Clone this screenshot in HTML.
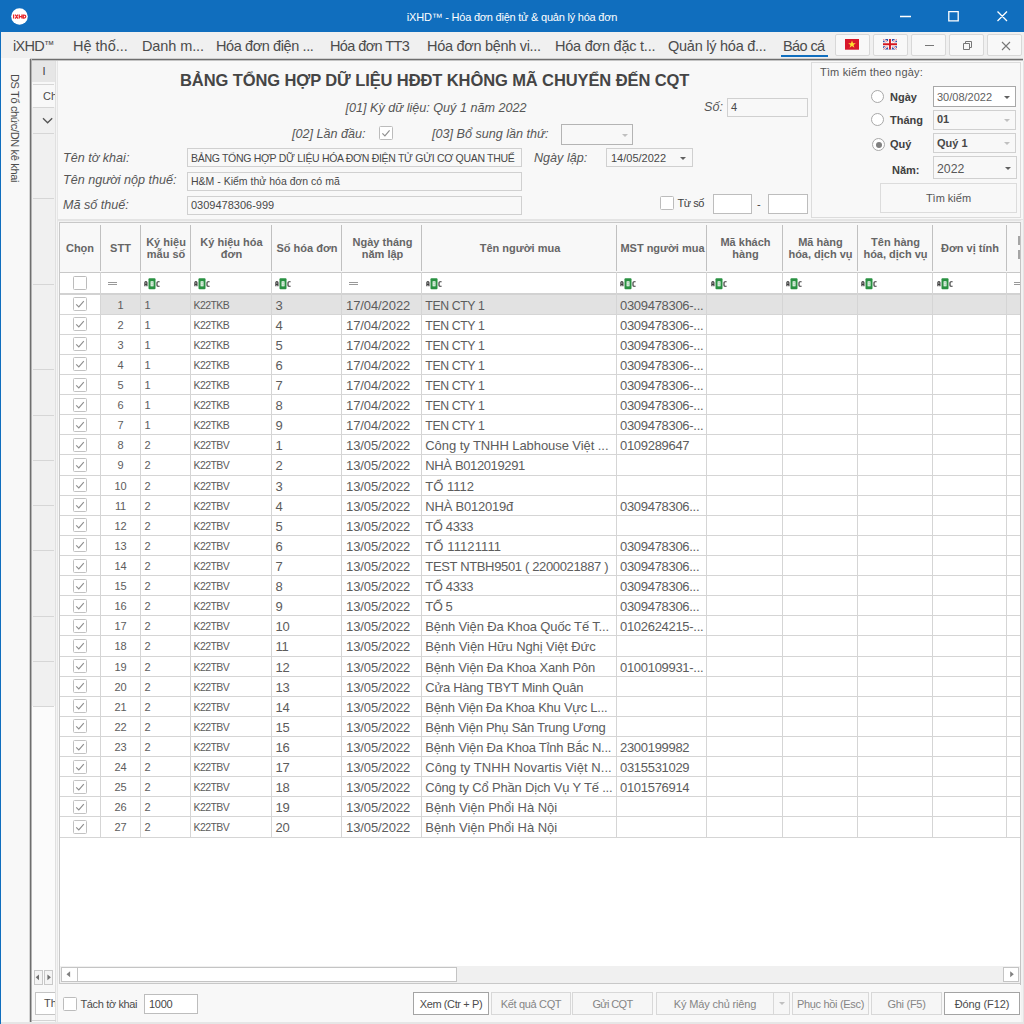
<!DOCTYPE html>
<html><head><meta charset="utf-8"><title>iXHD</title>
<style>
*{box-sizing:border-box;margin:0;padding:0}
html,body{width:1024px;height:1024px;overflow:hidden;background:#f0f0f0;font-family:"Liberation Sans",sans-serif;font-size:11px;color:#404040}
.a{position:absolute}
#titlebar{position:absolute;left:0;top:0;width:1024px;height:32px;background:#106ebe}
#title{position:absolute;left:0;width:1024px;top:10px;text-align:center;color:#fff;font-size:11px;line-height:14px;letter-spacing:-0.22px}
#lborder{position:absolute;left:0;top:32px;width:1px;height:992px;background:#106ebe}
#menubar{position:absolute;left:1px;top:32px;width:1023px;height:26px;background:#f0f0f0}
.mi{position:absolute;top:37px;font-size:14.5px;line-height:18px;color:#4c4c4c;white-space:nowrap}
.mbtn{position:absolute;top:34px;height:22px;width:35px;border:1px solid #d8d8d8;border-radius:2px;background:#f8f8f8}
#side{position:absolute;left:1px;top:58px;width:29px;height:964px;background:#f8f8f8}
#sidetxt{position:absolute;left:8px;top:74px;writing-mode:vertical-rl;font-size:11px;color:#4c4c4c;white-space:nowrap;line-height:14px;letter-spacing:-0.35px}
#darkv{position:absolute;left:29px;top:59px;width:3px;height:963px;background:linear-gradient(to right,#d4d4d4 1px,#6e6e6e 1px,#6e6e6e 2px,#b4b4b4 2px)}
#darkh{position:absolute;left:30px;top:58px;width:993px;height:3px;background:linear-gradient(to bottom,#d0d0d0 1px,#6e6e6e 1px,#6e6e6e 2px,#c4c4c4 2px)}
#tabs{position:absolute;left:32px;top:61px;width:23px;height:961px;background:#f0f0f0}
#main{position:absolute;left:58px;top:61px;width:965px;height:961px;background:#f8f8f8}
.lbl{position:absolute;font-style:italic;font-size:12.6px;line-height:16px;color:#565656;white-space:nowrap}
.inp{position:absolute;border:1px solid #d0d0d0;background:#f8f8f8;font-size:11px;line-height:17px;padding-left:3px;color:#484848;white-space:nowrap;overflow:hidden}
.inp.w{background:#fff;border-color:#bdbdbd}
.cb{position:absolute;width:14px;height:14px;border:1px solid #bcbcbc;border-radius:1.5px;background:#fff}
.arr{position:absolute;width:0;height:0;border-left:3px solid transparent;border-right:3px solid transparent;border-top:3px solid #606060}
.arr.dis{border-top-color:#c0c0c0}
/* grid */
#grid{position:absolute;left:59px;top:222px;width:962px;height:762px;background:#fff;border:1px solid #c8c8c8}
#ghead{position:absolute;left:60px;top:223px;width:960px;height:50px;background:#f8f8f8;border-bottom:1px solid #c8c8c8;box-shadow:0 1px 0 #e4e4e4}
.hc{position:absolute;top:224px;height:48px;display:flex;align-items:center;justify-content:center;text-align:center;font-weight:bold;font-size:11px;line-height:12.5px;color:#666}
.hs{position:absolute;top:225px;width:1px;height:46px;background:#c0c0c0}
#frow{position:absolute;left:60px;top:273px;width:960px;height:22px;background:#fff;border-bottom:2px solid #d2d2d2}
.row{position:absolute;left:60px;width:960px;height:20.11px;border-bottom:1px solid #d5d5d5;background:#fff}
.row.sel{background:linear-gradient(to right,#fff 40px,#e2e2e2 40px)}
.row .c{position:absolute;top:0;height:20px;line-height:20px;white-space:nowrap;color:#5c5c5c}
.ck{position:absolute;left:13px;top:2.5px;width:14px;height:14px;border:1px solid #c2c2c2;border-radius:1.5px;background:#fff}
.ck svg{position:absolute;left:-1px;top:-1px;width:14px;height:14px}
.ck path{fill:none;stroke:#8e8e8e;stroke-width:1.15}
.c1{left:40px;width:41px;text-align:center;font-size:11px;letter-spacing:-0.2px}
.c2{left:84.5px;font-size:11px}
.c3{left:133.5px;font-size:10.5px;letter-spacing:-0.56px}
.c4{left:215.5px;top:1px!important;font-size:13px;letter-spacing:-0.3px}
.c5{left:286px;top:1px!important;font-size:13px;letter-spacing:-0.09px}
.c6{left:365.3px;top:1px!important;font-size:13px}
.c7{left:560px;top:1px!important;font-size:13px;letter-spacing:-0.3px}
.vl{position:absolute;width:1px;background:#d5d5d5}
.btn{position:absolute;top:992px;height:23px;border:1px solid #d8d8d8;background:#f6f6f6;color:#858585;font-size:11px;line-height:22px;text-align:center;white-space:nowrap}
.btn.on{background:#fff;border-color:#a4a4a4;color:#4c4c4c}
.rad{width:13px;height:13px;border-radius:50%;border:1px solid #a8a8a8;background:#fff}
.rad.on::after{content:"";position:absolute;left:2.5px;top:2.5px;width:6px;height:6px;border-radius:50%;background:#808080}
.rl{font-weight:bold;font-size:11px;line-height:14px;color:#404040}
.sb{border:1px solid #c4c4c4;background:#fff}

</style></head>
<body>
<div id="titlebar">
  <svg class="a" style="left:10.7px;top:7.6px" width="17" height="17" viewBox="0 0 17 17"><circle cx="8.5" cy="8.5" r="8.3" fill="#fff"/><g fill="none" stroke="#e6282e" stroke-width="1.25"><path d="M2.6 6.6V10.6M4.2 6.6L7 10.6M7 6.6L4.2 10.6M8.3 6.6V10.6M10.9 6.6V10.6M8.3 8.6H10.9M12.3 7.2H13.2Q14.8 7.2 14.8 8.6Q14.8 10 13.2 10H12.3Z"/></g></svg>
  <div id="title">iXHD™ - Hóa đơn điện tử &amp; quản lý hóa đơn</div>
  <svg class="a" style="left:894px;top:8px" width="120" height="18" viewBox="0 0 120 18"><path d="M6 8.5H17M54.8 3.7H64.2V12.9H54.8ZM103.5 3.5L113 13M113 3.5L103.5 13" fill="none" stroke="#fff" stroke-width="1.3"/></svg>
</div>
<div id="lborder"></div>
<div id="menubar"></div>
<div class="mi" style="left:13px;letter-spacing:-0.7px">iXHD<span style="font-size:10.5px;position:relative;top:-3px;letter-spacing:0;line-height:1px">™</span></div>
<div class="mi" style="left:73px">Hệ thố...</div>
<div class="mi" style="left:142px;letter-spacing:-0.1px">Danh m...</div>
<div class="mi" style="left:216px;letter-spacing:-0.4px">Hóa đơn điện ...</div>
<div class="mi" style="left:330px;letter-spacing:-0.6px">Hóa đơn TT3</div>
<div class="mi" style="left:427px;letter-spacing:-0.3px">Hóa đơn bệnh vi...</div>
<div class="mi" style="left:555px;letter-spacing:-0.22px">Hóa đơn đặc t...</div>
<div class="mi" style="left:668px;letter-spacing:-0.25px">Quản lý hóa đ...</div>
<div class="mi" style="left:783px;letter-spacing:-0.6px">Báo cá</div>
<div class="a" style="left:781px;top:55px;width:47px;height:2px;background:#106ebe"></div>
<div class="mbtn" style="left:835px"><svg class="a" style="left:9px;top:4.3px" width="14" height="11" viewBox="0 0 14 11"><rect width="14" height="10.7" fill="#d8172b"/><polygon points="7,1.6 8,4.3 10.8,4.3 8.5,6 9.4,8.7 7,7.1 4.6,8.7 5.5,6 3.2,4.3 6,4.3" fill="#ffe030"/></svg></div>
<div class="mbtn" style="left:873px"><svg class="a" style="left:9px;top:4.3px" width="14" height="11" viewBox="0 0 14 11"><rect width="14" height="10.5" fill="#3550a8"/><path d="M0 0L14 10.5M14 0L0 10.5" stroke="#fff" stroke-width="2"/><path d="M0 0L14 10.5M14 0L0 10.5" stroke="#e05560" stroke-width="0.7"/><path d="M7 0V10.5M0 5.25H14" stroke="#fff" stroke-width="3.8"/><path d="M7 0V10.5M0 5.25H14" stroke="#d4141e" stroke-width="1.9"/></svg></div>
<div class="mbtn" style="left:911px"><div class="a" style="left:13px;top:10px;width:9px;height:1px;background:#777"></div></div>
<div class="mbtn" style="left:949px"><svg class="a" style="left:12px;top:5px" width="12" height="12" viewBox="0 0 12 12"><path d="M3.5 3.5V1.5H9.5V7.5H7.5M1.5 3.5H7.5V9.5H1.5Z" fill="none" stroke="#777" stroke-width="1"/></svg></div>
<div class="mbtn" style="left:987px"><svg class="a" style="left:12px;top:5px" width="12" height="12" viewBox="0 0 12 12"><path d="M2 2L10 10M10 2L2 10" fill="none" stroke="#777" stroke-width="1.1"/></svg></div>

<div id="side"></div>
<div id="sidetxt">DS Tổ chức/DN kê khai</div>
<div id="darkh"></div><div id="darkv"></div>
<div id="tabs">
  <div class="a" style="left:0;top:0;width:23px;height:21px;background:#e6e6e6;text-align:center;line-height:21px;font-size:11px;padding-left:1px">I</div>
  <div class="a" style="left:0;top:21px;width:23px;height:25px;background:#f8f8f8;line-height:29px;font-size:11px;padding-left:11px;overflow:hidden;color:#4c4c4c">Ch</div>
  <svg class="a" style="left:9.5px;top:56px" width="12" height="8" viewBox="0 0 12 8"><path d="M1 1.2L5.6 5.8L10.2 1.2" fill="none" stroke="#555" stroke-width="1.3"/></svg>
  <div class="a" style="left:0;top:645px;width:23px;height:316px;background:#fbfbfb"></div>
  <div class="a" style="left:1px;top:22.5px;width:21px;height:1px;background:#d6d6d6"></div>
  <div class="a" style="left:1px;top:45.5px;width:21px;height:1px;background:#d6d6d6"></div>
  <div class="a" style="left:1px;top:71.5px;width:21px;height:1px;background:#d6d6d6"></div>
  <div class="a" style="left:1px;top:136.5px;width:21px;height:1px;background:#d6d6d6"></div>
  <div class="a" style="left:1px;top:222.5px;width:21px;height:1px;background:#d6d6d6"></div>
  <div class="a" style="left:1px;top:307.5px;width:21px;height:1px;background:#d6d6d6"></div>
  <div class="a" style="left:1px;top:353.5px;width:21px;height:1px;background:#d6d6d6"></div>
  <div class="a" style="left:1px;top:398.5px;width:21px;height:1px;background:#d6d6d6"></div>
  <div class="a" style="left:1px;top:443.5px;width:21px;height:1px;background:#d6d6d6"></div>
  <div class="a" style="left:1px;top:488.5px;width:21px;height:1px;background:#d6d6d6"></div>
  <div class="a" style="left:1px;top:554.5px;width:21px;height:1px;background:#d6d6d6"></div>
  <div class="a" style="left:1px;top:599.5px;width:21px;height:1px;background:#d6d6d6"></div>
  <div class="a" style="left:1px;top:644.5px;width:21px;height:1px;background:#d6d6d6"></div>
</div>
<div class="a" style="left:55px;top:61px;width:3px;height:961px;background:#f4f4f4;border-left:1px solid #e0e0e0;border-right:1px solid #e6e6e6"></div>
<div id="main"></div>

<!-- form header -->
<div class="a" style="left:180px;top:70px;width:509px;text-align:center;font-weight:bold;font-size:16.5px;line-height:20px;color:#454545;white-space:nowrap;letter-spacing:-0.1px" id="bigtitle">BẢNG TỔNG HỢP DỮ LIỆU HĐĐT KHÔNG MÃ CHUYỂN ĐẾN CQT</div>
<div class="lbl" style="left:345.5px;top:100px;letter-spacing:0px">[01] Kỳ dữ liệu: Quý 1 năm 2022</div>
<div class="lbl" style="left:704px;top:99px">Số:</div>
<div class="inp" style="left:727px;top:98px;width:81px;height:19px">4</div>
<div class="lbl" style="left:292px;top:126px">[02] Lần đầu:</div>
<div class="cb" style="left:379px;top:126px"><svg class="a" style="left:-1px;top:-1px" width="14" height="14" viewBox="0 0 14 14"><path d="M3.4 7.4L5.9 9.9L10.6 4.4" fill="none" stroke="#909090" stroke-width="1.2"/></svg></div>
<div class="lbl" style="left:432px;top:126px">[03] Bổ sung lần thứ:</div>
<div class="inp" style="left:561px;top:124px;width:72px;height:21px;border-color:#b4b4b4"></div><div class="arr dis" style="left:622px;top:134px"></div>
<div class="lbl" style="left:63px;top:150px">Tên tờ khai:</div>
<div class="inp" style="left:187px;top:148px;width:335px;height:19px;font-size:10.5px;letter-spacing:-0.31px;padding-top:1px">BẢNG TỔNG HỢP DỮ LIỆU HÓA ĐƠN ĐIỆN TỬ GỬI CƠ QUAN THUẾ</div>
<div class="lbl" style="left:534px;top:150px">Ngày lập:</div>
<div class="inp" style="left:606px;top:148px;width:87px;height:19px;padding-left:4px;padding-top:1px">14/05/2022</div><div class="arr" style="left:680px;top:157px"></div>
<div class="lbl" style="left:63px;top:172px">Tên người nộp thuế:</div>
<div class="inp" style="left:187px;top:172px;width:335px;height:19px;font-size:10.5px">H&amp;M - Kiểm thử hóa đơn có mã</div>
<div class="lbl" style="left:63px;top:197px">Mã số thuế:</div>
<div class="inp" style="left:187px;top:196px;width:335px;height:19px">0309478306-999</div>
<div class="cb" style="left:660px;top:196px"></div>
<div class="a" style="left:677.5px;top:196px;font-size:11px;line-height:14px;letter-spacing:-0.5px">Từ số</div>
<div class="inp w" style="left:713px;top:194px;width:39px;height:20px"></div>
<div class="a" style="left:757px;top:198px;font-size:11px">-</div>
<div class="inp w" style="left:768px;top:194px;width:40px;height:20px"></div>

<!-- search panel -->
<div class="a" style="left:811px;top:62px;width:210px;height:156px;border:1px solid #dcdcdc;background:#f8f8f8"></div>
<div class="a" style="left:820px;top:65px;font-size:11px;line-height:14px;color:#555;letter-spacing:0.17px">Tìm kiếm theo ngày:</div>
<div class="a rad" style="left:871px;top:90px"></div><div class="a rl" style="left:890px;top:90px">Ngày</div>
<div class="inp w" style="left:933px;top:86px;width:83px;height:21px;line-height:21px;color:#606060;border-color:#a8a8a8">30/08/2022</div><div class="arr" style="left:1004px;top:96px"></div>
<div class="a rad" style="left:871px;top:113px"></div><div class="a rl" style="left:890px;top:113px">Tháng</div>
<div class="inp" style="left:933px;top:110px;width:83px;height:20px;font-weight:bold">01</div><div class="arr dis" style="left:1004px;top:119px"></div>
<div class="a rad on" style="left:872px;top:138px"></div><div class="a rl" style="left:890px;top:137px">Quý</div>
<div class="inp" style="left:933px;top:133px;width:83px;height:20px;font-weight:bold;line-height:19px">Quý 1</div><div class="arr dis" style="left:1004px;top:142px"></div>
<div class="a rl" style="left:892px;top:163px">Năm:</div>
<div class="inp" style="left:933px;top:156px;width:84px;height:23px;font-size:12.3px;line-height:24px;color:#585858">2022</div><div class="arr" style="left:1005px;top:167px"></div>
<div class="a" style="left:880px;top:183px;width:137px;height:30px;border:1px solid #dcdcdc;background:#f8f8f8;text-align:center;line-height:28px;font-size:11px;color:#555">Tìm kiếm</div>

<!-- grid -->
<div class="a" style="left:58px;top:219px;width:966px;height:2px;background:#e4e4e4"></div><div class="a" style="left:58px;top:221px;width:966px;height:1px;background:#f2f2f2"></div>
<div id="grid"></div>
<div id="ghead"></div>
<div class="hc" style="left:60px;width:40px">Chọn</div>
<div class="hc" style="left:100px;width:41px">STT</div>
<div class="hc" style="left:141px;width:50px">Ký hiệu<br>mẫu số</div>
<div class="hc" style="left:191px;width:81px">Ký hiệu hóa<br>đơn</div>
<div class="hc" style="left:272px;width:70px">Số hóa đơn</div>
<div class="hc" style="left:342px;width:81px">Ngày tháng<br>năm lập</div>
<div class="hc" style="left:423px;width:194px">Tên người mua</div>
<div class="hc" style="left:617px;width:91px">MST người mua</div>
<div class="hc" style="left:708px;width:75px">Mã khách<br>hàng</div>
<div class="hc" style="left:783px;width:75px">Mã hàng<br>hóa, dịch vụ</div>
<div class="hc" style="left:858px;width:75px">Tên hàng<br>hóa, dịch vụ</div>
<div class="hc" style="left:933px;width:74px">Đơn vị tính</div>
<div class="hs" style="left:100px"></div><div class="hs" style="left:140px"></div><div class="hs" style="left:190px"></div><div class="hs" style="left:271px"></div><div class="hs" style="left:341px"></div><div class="hs" style="left:421px"></div><div class="hs" style="left:616px"></div><div class="hs" style="left:706px"></div><div class="hs" style="left:782px"></div><div class="hs" style="left:857px"></div><div class="hs" style="left:932px"></div><div class="hs" style="left:1006px"></div>
<div id="frow"></div>
<div class="cb" style="left:73px;top:276px"></div>
<div class="row sel" style="top:294.60px"><span class="ck"><svg viewBox="0 0 14 14"><path d="M3.2 7.4 L5.8 10 L10.8 4.2" /></svg></span><span class="c c1">1</span><span class="c c2">1</span><span class="c c3">K22TKB</span><span class="c c4">3</span><span class="c c5">17/04/2022</span><span class="c c6" style="font-size:12.3px;letter-spacing:-0.39px">TEN CTY 1</span><span class="c c7">0309478306-...</span></div>
<div class="row" style="top:314.71px"><span class="ck"><svg viewBox="0 0 14 14"><path d="M3.2 7.4 L5.8 10 L10.8 4.2" /></svg></span><span class="c c1">2</span><span class="c c2">1</span><span class="c c3">K22TKB</span><span class="c c4">4</span><span class="c c5">17/04/2022</span><span class="c c6" style="font-size:12.3px;letter-spacing:-0.39px">TEN CTY 1</span><span class="c c7">0309478306-...</span></div>
<div class="row" style="top:334.82px"><span class="ck"><svg viewBox="0 0 14 14"><path d="M3.2 7.4 L5.8 10 L10.8 4.2" /></svg></span><span class="c c1">3</span><span class="c c2">1</span><span class="c c3">K22TKB</span><span class="c c4">5</span><span class="c c5">17/04/2022</span><span class="c c6" style="font-size:12.3px;letter-spacing:-0.39px">TEN CTY 1</span><span class="c c7">0309478306-...</span></div>
<div class="row" style="top:354.93px"><span class="ck"><svg viewBox="0 0 14 14"><path d="M3.2 7.4 L5.8 10 L10.8 4.2" /></svg></span><span class="c c1">4</span><span class="c c2">1</span><span class="c c3">K22TKB</span><span class="c c4">6</span><span class="c c5">17/04/2022</span><span class="c c6" style="font-size:12.3px;letter-spacing:-0.39px">TEN CTY 1</span><span class="c c7">0309478306-...</span></div>
<div class="row" style="top:375.04px"><span class="ck"><svg viewBox="0 0 14 14"><path d="M3.2 7.4 L5.8 10 L10.8 4.2" /></svg></span><span class="c c1">5</span><span class="c c2">1</span><span class="c c3">K22TKB</span><span class="c c4">7</span><span class="c c5">17/04/2022</span><span class="c c6" style="font-size:12.3px;letter-spacing:-0.39px">TEN CTY 1</span><span class="c c7">0309478306-...</span></div>
<div class="row" style="top:395.15px"><span class="ck"><svg viewBox="0 0 14 14"><path d="M3.2 7.4 L5.8 10 L10.8 4.2" /></svg></span><span class="c c1">6</span><span class="c c2">1</span><span class="c c3">K22TKB</span><span class="c c4">8</span><span class="c c5">17/04/2022</span><span class="c c6" style="font-size:12.3px;letter-spacing:-0.39px">TEN CTY 1</span><span class="c c7">0309478306-...</span></div>
<div class="row" style="top:415.26px"><span class="ck"><svg viewBox="0 0 14 14"><path d="M3.2 7.4 L5.8 10 L10.8 4.2" /></svg></span><span class="c c1">7</span><span class="c c2">1</span><span class="c c3">K22TKB</span><span class="c c4">9</span><span class="c c5">17/04/2022</span><span class="c c6" style="font-size:12.3px;letter-spacing:-0.39px">TEN CTY 1</span><span class="c c7">0309478306-...</span></div>
<div class="row" style="top:435.37px"><span class="ck"><svg viewBox="0 0 14 14"><path d="M3.2 7.4 L5.8 10 L10.8 4.2" /></svg></span><span class="c c1">8</span><span class="c c2">2</span><span class="c c3">K22TBV</span><span class="c c4">1</span><span class="c c5">13/05/2022</span><span class="c c6" style="letter-spacing:-0.07px">Công ty TNHH Labhouse Việt ...</span><span class="c c7">0109289647</span></div>
<div class="row" style="top:455.48px"><span class="ck"><svg viewBox="0 0 14 14"><path d="M3.2 7.4 L5.8 10 L10.8 4.2" /></svg></span><span class="c c1">9</span><span class="c c2">2</span><span class="c c3">K22TBV</span><span class="c c4">2</span><span class="c c5">13/05/2022</span><span class="c c6" style="letter-spacing:-0.37px">NHÀ B012019291</span><span class="c c7"></span></div>
<div class="row" style="top:475.59px"><span class="ck"><svg viewBox="0 0 14 14"><path d="M3.2 7.4 L5.8 10 L10.8 4.2" /></svg></span><span class="c c1">10</span><span class="c c2">2</span><span class="c c3">K22TBV</span><span class="c c4">3</span><span class="c c5">13/05/2022</span><span class="c c6" style="letter-spacing:0.01px">TỔ 1112</span><span class="c c7"></span></div>
<div class="row" style="top:495.70px"><span class="ck"><svg viewBox="0 0 14 14"><path d="M3.2 7.4 L5.8 10 L10.8 4.2" /></svg></span><span class="c c1">11</span><span class="c c2">2</span><span class="c c3">K22TBV</span><span class="c c4">4</span><span class="c c5">13/05/2022</span><span class="c c6" style="letter-spacing:-0.21px">NHÀ B012019đ</span><span class="c c7">0309478306...</span></div>
<div class="row" style="top:515.81px"><span class="ck"><svg viewBox="0 0 14 14"><path d="M3.2 7.4 L5.8 10 L10.8 4.2" /></svg></span><span class="c c1">12</span><span class="c c2">2</span><span class="c c3">K22TBV</span><span class="c c4">5</span><span class="c c5">13/05/2022</span><span class="c c6" style="letter-spacing:-0.39px">TỔ 4333</span><span class="c c7"></span></div>
<div class="row" style="top:535.92px"><span class="ck"><svg viewBox="0 0 14 14"><path d="M3.2 7.4 L5.8 10 L10.8 4.2" /></svg></span><span class="c c1">13</span><span class="c c2">2</span><span class="c c3">K22TBV</span><span class="c c4">6</span><span class="c c5">13/05/2022</span><span class="c c6" style="letter-spacing:0.10px">TỔ 11121111</span><span class="c c7">0309478306...</span></div>
<div class="row" style="top:556.03px"><span class="ck"><svg viewBox="0 0 14 14"><path d="M3.2 7.4 L5.8 10 L10.8 4.2" /></svg></span><span class="c c1">14</span><span class="c c2">2</span><span class="c c3">K22TBV</span><span class="c c4">7</span><span class="c c5">13/05/2022</span><span class="c c6" style="letter-spacing:-0.35px">TEST NTBH9501 ( 2200021887 )</span><span class="c c7">0309478306...</span></div>
<div class="row" style="top:576.14px"><span class="ck"><svg viewBox="0 0 14 14"><path d="M3.2 7.4 L5.8 10 L10.8 4.2" /></svg></span><span class="c c1">15</span><span class="c c2">2</span><span class="c c3">K22TBV</span><span class="c c4">8</span><span class="c c5">13/05/2022</span><span class="c c6" style="letter-spacing:-0.39px">TỔ 4333</span><span class="c c7">0309478306...</span></div>
<div class="row" style="top:596.25px"><span class="ck"><svg viewBox="0 0 14 14"><path d="M3.2 7.4 L5.8 10 L10.8 4.2" /></svg></span><span class="c c1">16</span><span class="c c2">2</span><span class="c c3">K22TBV</span><span class="c c4">9</span><span class="c c5">13/05/2022</span><span class="c c6" style="letter-spacing:-0.47px">TỔ 5</span><span class="c c7">0309478306...</span></div>
<div class="row" style="top:616.36px"><span class="ck"><svg viewBox="0 0 14 14"><path d="M3.2 7.4 L5.8 10 L10.8 4.2" /></svg></span><span class="c c1">17</span><span class="c c2">2</span><span class="c c3">K22TBV</span><span class="c c4">10</span><span class="c c5">13/05/2022</span><span class="c c6" style="letter-spacing:-0.14px">Bệnh Viện Đa Khoa Quốc Tế T...</span><span class="c c7">0102624215-...</span></div>
<div class="row" style="top:636.47px"><span class="ck"><svg viewBox="0 0 14 14"><path d="M3.2 7.4 L5.8 10 L10.8 4.2" /></svg></span><span class="c c1">18</span><span class="c c2">2</span><span class="c c3">K22TBV</span><span class="c c4">11</span><span class="c c5">13/05/2022</span><span class="c c6" style="letter-spacing:-0.10px">Bệnh Viện Hữu Nghị Việt Đức</span><span class="c c7"></span></div>
<div class="row" style="top:656.58px"><span class="ck"><svg viewBox="0 0 14 14"><path d="M3.2 7.4 L5.8 10 L10.8 4.2" /></svg></span><span class="c c1">19</span><span class="c c2">2</span><span class="c c3">K22TBV</span><span class="c c4">12</span><span class="c c5">13/05/2022</span><span class="c c6" style="letter-spacing:-0.19px">Bệnh Viện Đa Khoa Xanh Pôn</span><span class="c c7">0100109931-...</span></div>
<div class="row" style="top:676.69px"><span class="ck"><svg viewBox="0 0 14 14"><path d="M3.2 7.4 L5.8 10 L10.8 4.2" /></svg></span><span class="c c1">20</span><span class="c c2">2</span><span class="c c3">K22TBV</span><span class="c c4">13</span><span class="c c5">13/05/2022</span><span class="c c6" style="letter-spacing:-0.25px">Cửa Hàng TBYT Minh Quân</span><span class="c c7"></span></div>
<div class="row" style="top:696.80px"><span class="ck"><svg viewBox="0 0 14 14"><path d="M3.2 7.4 L5.8 10 L10.8 4.2" /></svg></span><span class="c c1">21</span><span class="c c2">2</span><span class="c c3">K22TBV</span><span class="c c4">14</span><span class="c c5">13/05/2022</span><span class="c c6" style="letter-spacing:-0.26px">Bệnh Viện Đa Khoa Khu Vực L...</span><span class="c c7"></span></div>
<div class="row" style="top:716.91px"><span class="ck"><svg viewBox="0 0 14 14"><path d="M3.2 7.4 L5.8 10 L10.8 4.2" /></svg></span><span class="c c1">22</span><span class="c c2">2</span><span class="c c3">K22TBV</span><span class="c c4">15</span><span class="c c5">13/05/2022</span><span class="c c6" style="letter-spacing:-0.27px">Bệnh Viện Phụ Sản Trung Ương</span><span class="c c7"></span></div>
<div class="row" style="top:737.02px"><span class="ck"><svg viewBox="0 0 14 14"><path d="M3.2 7.4 L5.8 10 L10.8 4.2" /></svg></span><span class="c c1">23</span><span class="c c2">2</span><span class="c c3">K22TBV</span><span class="c c4">16</span><span class="c c5">13/05/2022</span><span class="c c6" style="letter-spacing:-0.21px">Bệnh Viện Đa Khoa Tỉnh Bắc N...</span><span class="c c7">2300199982</span></div>
<div class="row" style="top:757.13px"><span class="ck"><svg viewBox="0 0 14 14"><path d="M3.2 7.4 L5.8 10 L10.8 4.2" /></svg></span><span class="c c1">24</span><span class="c c2">2</span><span class="c c3">K22TBV</span><span class="c c4">17</span><span class="c c5">13/05/2022</span><span class="c c6" style="letter-spacing:0.04px">Công ty TNHH Novartis Việt N...</span><span class="c c7">0315531029</span></div>
<div class="row" style="top:777.24px"><span class="ck"><svg viewBox="0 0 14 14"><path d="M3.2 7.4 L5.8 10 L10.8 4.2" /></svg></span><span class="c c1">25</span><span class="c c2">2</span><span class="c c3">K22TBV</span><span class="c c4">18</span><span class="c c5">13/05/2022</span><span class="c c6" style="letter-spacing:-0.18px">Công ty Cổ Phần Dịch Vụ Y Tế ...</span><span class="c c7">0101576914</span></div>
<div class="row" style="top:797.35px"><span class="ck"><svg viewBox="0 0 14 14"><path d="M3.2 7.4 L5.8 10 L10.8 4.2" /></svg></span><span class="c c1">26</span><span class="c c2">2</span><span class="c c3">K22TBV</span><span class="c c4">19</span><span class="c c5">13/05/2022</span><span class="c c6" style="letter-spacing:-0.05px">Bệnh Viện Phổi Hà Nội</span><span class="c c7"></span></div>
<div class="row" style="top:817.46px"><span class="ck"><svg viewBox="0 0 14 14"><path d="M3.2 7.4 L5.8 10 L10.8 4.2" /></svg></span><span class="c c1">27</span><span class="c c2">2</span><span class="c c3">K22TBV</span><span class="c c4">20</span><span class="c c5">13/05/2022</span><span class="c c6" style="letter-spacing:-0.05px">Bệnh Viện Phổi Hà Nội</span><span class="c c7"></span></div>
<svg class="a" style="left:144.4px;top:277.5px" width="16" height="12" viewBox="0 0 16 12"><path d="M0.9 8.3V4.6Q0.9 3.7 1.9 3.7Q2.9 3.7 2.9 4.6V8.3M0.9 6.4H2.9M15.6 3.75H13.9Q13 3.75 13 4.65V7.35Q13 8.25 13.9 8.25H15.6" fill="none" stroke="#3c3c3c" stroke-width="1.2"/><rect x="4.5" y="0.3" width="7" height="10.9" rx="0.9" fill="#2a9142"/><rect x="6.6" y="3.3" width="2.9" height="5" fill="#fff"/><rect x="7.55" y="4.4" width="1" height="1" fill="#2a9142"/><rect x="7.55" y="6.4" width="1" height="1" fill="#2a9142"/></svg><svg class="a" style="left:194.4px;top:277.5px" width="16" height="12" viewBox="0 0 16 12"><path d="M0.9 8.3V4.6Q0.9 3.7 1.9 3.7Q2.9 3.7 2.9 4.6V8.3M0.9 6.4H2.9M15.6 3.75H13.9Q13 3.75 13 4.65V7.35Q13 8.25 13.9 8.25H15.6" fill="none" stroke="#3c3c3c" stroke-width="1.2"/><rect x="4.5" y="0.3" width="7" height="10.9" rx="0.9" fill="#2a9142"/><rect x="6.6" y="3.3" width="2.9" height="5" fill="#fff"/><rect x="7.55" y="4.4" width="1" height="1" fill="#2a9142"/><rect x="7.55" y="6.4" width="1" height="1" fill="#2a9142"/></svg><svg class="a" style="left:275.2px;top:277.5px" width="16" height="12" viewBox="0 0 16 12"><path d="M0.9 8.3V4.6Q0.9 3.7 1.9 3.7Q2.9 3.7 2.9 4.6V8.3M0.9 6.4H2.9M15.6 3.75H13.9Q13 3.75 13 4.65V7.35Q13 8.25 13.9 8.25H15.6" fill="none" stroke="#3c3c3c" stroke-width="1.2"/><rect x="4.5" y="0.3" width="7" height="10.9" rx="0.9" fill="#2a9142"/><rect x="6.6" y="3.3" width="2.9" height="5" fill="#fff"/><rect x="7.55" y="4.4" width="1" height="1" fill="#2a9142"/><rect x="7.55" y="6.4" width="1" height="1" fill="#2a9142"/></svg><svg class="a" style="left:425.59999999999997px;top:277.5px" width="16" height="12" viewBox="0 0 16 12"><path d="M0.9 8.3V4.6Q0.9 3.7 1.9 3.7Q2.9 3.7 2.9 4.6V8.3M0.9 6.4H2.9M15.6 3.75H13.9Q13 3.75 13 4.65V7.35Q13 8.25 13.9 8.25H15.6" fill="none" stroke="#3c3c3c" stroke-width="1.2"/><rect x="4.5" y="0.3" width="7" height="10.9" rx="0.9" fill="#2a9142"/><rect x="6.6" y="3.3" width="2.9" height="5" fill="#fff"/><rect x="7.55" y="4.4" width="1" height="1" fill="#2a9142"/><rect x="7.55" y="6.4" width="1" height="1" fill="#2a9142"/></svg><svg class="a" style="left:620.1px;top:277.5px" width="16" height="12" viewBox="0 0 16 12"><path d="M0.9 8.3V4.6Q0.9 3.7 1.9 3.7Q2.9 3.7 2.9 4.6V8.3M0.9 6.4H2.9M15.6 3.75H13.9Q13 3.75 13 4.65V7.35Q13 8.25 13.9 8.25H15.6" fill="none" stroke="#3c3c3c" stroke-width="1.2"/><rect x="4.5" y="0.3" width="7" height="10.9" rx="0.9" fill="#2a9142"/><rect x="6.6" y="3.3" width="2.9" height="5" fill="#fff"/><rect x="7.55" y="4.4" width="1" height="1" fill="#2a9142"/><rect x="7.55" y="6.4" width="1" height="1" fill="#2a9142"/></svg><svg class="a" style="left:710.6999999999999px;top:277.5px" width="16" height="12" viewBox="0 0 16 12"><path d="M0.9 8.3V4.6Q0.9 3.7 1.9 3.7Q2.9 3.7 2.9 4.6V8.3M0.9 6.4H2.9M15.6 3.75H13.9Q13 3.75 13 4.65V7.35Q13 8.25 13.9 8.25H15.6" fill="none" stroke="#3c3c3c" stroke-width="1.2"/><rect x="4.5" y="0.3" width="7" height="10.9" rx="0.9" fill="#2a9142"/><rect x="6.6" y="3.3" width="2.9" height="5" fill="#fff"/><rect x="7.55" y="4.4" width="1" height="1" fill="#2a9142"/><rect x="7.55" y="6.4" width="1" height="1" fill="#2a9142"/></svg><svg class="a" style="left:786.4px;top:277.5px" width="16" height="12" viewBox="0 0 16 12"><path d="M0.9 8.3V4.6Q0.9 3.7 1.9 3.7Q2.9 3.7 2.9 4.6V8.3M0.9 6.4H2.9M15.6 3.75H13.9Q13 3.75 13 4.65V7.35Q13 8.25 13.9 8.25H15.6" fill="none" stroke="#3c3c3c" stroke-width="1.2"/><rect x="4.5" y="0.3" width="7" height="10.9" rx="0.9" fill="#2a9142"/><rect x="6.6" y="3.3" width="2.9" height="5" fill="#fff"/><rect x="7.55" y="4.4" width="1" height="1" fill="#2a9142"/><rect x="7.55" y="6.4" width="1" height="1" fill="#2a9142"/></svg><svg class="a" style="left:861.1999999999999px;top:277.5px" width="16" height="12" viewBox="0 0 16 12"><path d="M0.9 8.3V4.6Q0.9 3.7 1.9 3.7Q2.9 3.7 2.9 4.6V8.3M0.9 6.4H2.9M15.6 3.75H13.9Q13 3.75 13 4.65V7.35Q13 8.25 13.9 8.25H15.6" fill="none" stroke="#3c3c3c" stroke-width="1.2"/><rect x="4.5" y="0.3" width="7" height="10.9" rx="0.9" fill="#2a9142"/><rect x="6.6" y="3.3" width="2.9" height="5" fill="#fff"/><rect x="7.55" y="4.4" width="1" height="1" fill="#2a9142"/><rect x="7.55" y="6.4" width="1" height="1" fill="#2a9142"/></svg><svg class="a" style="left:936.6999999999999px;top:277.5px" width="16" height="12" viewBox="0 0 16 12"><path d="M0.9 8.3V4.6Q0.9 3.7 1.9 3.7Q2.9 3.7 2.9 4.6V8.3M0.9 6.4H2.9M15.6 3.75H13.9Q13 3.75 13 4.65V7.35Q13 8.25 13.9 8.25H15.6" fill="none" stroke="#3c3c3c" stroke-width="1.2"/><rect x="4.5" y="0.3" width="7" height="10.9" rx="0.9" fill="#2a9142"/><rect x="6.6" y="3.3" width="2.9" height="5" fill="#fff"/><rect x="7.55" y="4.4" width="1" height="1" fill="#2a9142"/><rect x="7.55" y="6.4" width="1" height="1" fill="#2a9142"/></svg><div class="a" style="left:107.6px;top:281.5px;width:9px;height:3.4px;border-top:1.1px solid #999;border-bottom:1.1px solid #999"></div><div class="a" style="left:349.3px;top:281.5px;width:9px;height:3.4px;border-top:1.1px solid #999;border-bottom:1.1px solid #999"></div><div class="a" style="left:1014.0px;top:281.5px;width:9px;height:3.4px;border-top:1.1px solid #999;border-bottom:1.1px solid #999"></div>
<div class="vl" style="left:100px;top:272px;height:565.57px"></div><div class="vl" style="left:140px;top:272px;height:565.57px"></div><div class="vl" style="left:190px;top:272px;height:565.57px"></div><div class="vl" style="left:271px;top:272px;height:565.57px"></div><div class="vl" style="left:341px;top:272px;height:565.57px"></div><div class="vl" style="left:421px;top:272px;height:565.57px"></div><div class="vl" style="left:616px;top:272px;height:565.57px"></div><div class="vl" style="left:706px;top:272px;height:565.57px"></div><div class="vl" style="left:782px;top:272px;height:565.57px"></div><div class="vl" style="left:857px;top:272px;height:565.57px"></div><div class="vl" style="left:932px;top:272px;height:565.57px"></div><div class="vl" style="left:1006px;top:272px;height:565.57px"></div>
<!-- right edge cover -->
<div class="a" style="left:1018px;top:236px;width:2px;height:9px;background:#8a8a8a;opacity:.75"></div>
<div class="a" style="left:1018px;top:250px;width:2px;height:9px;background:#8a8a8a;opacity:.75"></div>
<div class="a" style="left:1020px;top:222px;width:1px;height:763px;background:#c4c4c4"></div>
<div class="a" style="left:1021px;top:220px;width:2px;height:802px;background:#f2f2f2"></div>
<div class="a" style="left:1023px;top:61px;width:1px;height:961px;background:#e4e4e4"></div>
<!-- scrollbar -->
<div class="a" style="left:60px;top:966px;width:960px;height:17px;background:#f0f0f0"></div>
<div class="a sb" style="left:61px;top:967px;width:17px;height:15px"></div>
<div class="a sb" style="left:77px;top:967px;width:380px;height:15px"></div>
<div class="a sb" style="left:1003px;top:967px;width:16px;height:15px"></div>
<svg class="a" style="left:61px;top:967px" width="17" height="15" viewBox="0 0 17 15"><path d="M9.1 4.2V10.3L5.5 7.25Z" fill="#808080"/></svg>
<svg class="a" style="left:1003px;top:967px" width="16" height="15" viewBox="0 0 16 15"><path d="M7.2 4.2V10.3L10.8 7.25Z" fill="#808080"/></svg>
<!-- bottom bar -->
<div class="a" style="left:32px;top:985px;width:23px;height:37px;background:#f8f8f8"></div>
<div class="a" style="left:34px;top:970px;width:9px;height:15px;border:1px solid #c8c8c8;background:#f4f4f4"></div>
<div class="a" style="left:44px;top:970px;width:9px;height:15px;border:1px solid #c8c8c8;background:#f4f4f4"></div>
<svg class="a" style="left:34px;top:970px" width="20" height="15" viewBox="0 0 20 15"><path d="M5 4.5V10.2L1.7 7.35ZM13.4 4.5V10.2L16.9 7.35Z" fill="#707070"/></svg>
<div class="a" style="left:35px;top:992px;width:20px;height:23px;border:1px solid #c4c4c4;border-right:none;background:#fff;font-size:11px;line-height:20px;padding-left:8px;overflow:hidden;color:#4c4c4c">Th</div>
<div class="a" style="left:32px;top:1020px;width:24px;height:1px;background:#d4d4d4"></div>
<div class="cb" style="left:63px;top:997px"></div>
<div class="a" style="left:80.5px;top:996.5px;font-size:11px;line-height:14px;letter-spacing:-0.36px;color:#4c4c4c">Tách tờ khai</div>
<div class="inp w" style="left:144px;top:994px;width:54px;height:20px;padding-left:4px;letter-spacing:-0.3px;line-height:18px">1000</div>
<div class="btn on" style="left:413px;width:76px;letter-spacing:-0.38px">Xem (Ctr + P)</div>
<div class="btn" style="left:491px;width:80px;letter-spacing:-0.34px">Kết quả CQT</div>
<div class="btn" style="left:572px;width:81px;letter-spacing:-0.65px">Gửi CQT</div>
<div class="btn" style="left:656px;width:118px;letter-spacing:-0.16px">Ký Máy chủ riêng</div>
<div class="btn" style="left:773px;width:17px"></div><div class="arr dis" style="left:779px;top:1002px"></div>
<div class="btn" style="left:792px;width:77px;letter-spacing:-0.32px">Phục hồi (Esc)</div>
<div class="btn" style="left:871px;width:71px;letter-spacing:-0.27px">Ghi (F5)</div>
<div class="btn on" style="left:944px;width:76px;letter-spacing:-0.11px">Đóng (F12)</div>
<div class="a" style="left:1px;top:1022px;width:1023px;height:2px;background:#e6e6e6"></div>
</body></html>
